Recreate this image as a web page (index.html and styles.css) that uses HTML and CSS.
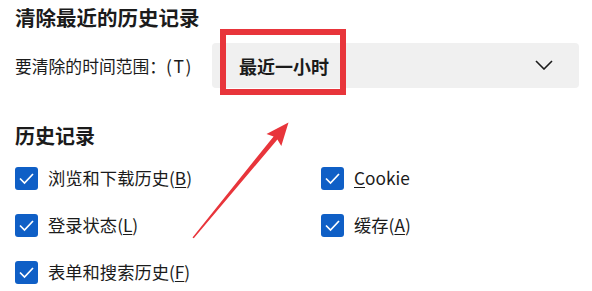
FILE: index.html
```html
<!DOCTYPE html>
<html lang="zh-CN">
<head>
<meta charset="utf-8">
<title>清除最近的历史记录</title>
<link rel="stylesheet" href="styles.css">
</head>
<body>
<div class="page">
  <h1 class="title">清除最近的历史记录</h1>
  <div class="range-row">
    <span class="range-label">要清除的时间范围：<span class="key">(T)</span></span>
    <div class="select">
      <span class="select-value">最近一小时</span>
      <svg class="chevron" width="18" height="10" viewBox="0 0 18 10"><path d="M1 1 L9 9 L17 1" fill="none" stroke="#1b1b1b" stroke-width="1.6"/></svg>
      <div class="highlight"></div>
    </div>
  </div>
  <h2 class="section">历史记录</h2>
  <div class="checks">
    <label class="check"><span class="box"><svg width="23" height="23" viewBox="0 0 23 23"><path d="M5 11.5 L9.5 16 L18 7" fill="none" stroke="#fff" stroke-width="1.7"/></svg></span><span class="text">浏览和下载历史(<u>B</u>)</span></label>
    <label class="check"><span class="box"><svg width="23" height="23" viewBox="0 0 23 23"><path d="M5 11.5 L9.5 16 L18 7" fill="none" stroke="#fff" stroke-width="1.7"/></svg></span><span class="text"><u>C</u>ookie</span></label>
    <label class="check"><span class="box"><svg width="23" height="23" viewBox="0 0 23 23"><path d="M5 11.5 L9.5 16 L18 7" fill="none" stroke="#fff" stroke-width="1.7"/></svg></span><span class="text">登录状态(<u>L</u>)</span></label>
    <label class="check"><span class="box"><svg width="23" height="23" viewBox="0 0 23 23"><path d="M5 11.5 L9.5 16 L18 7" fill="none" stroke="#fff" stroke-width="1.7"/></svg></span><span class="text">缓存(<u>A</u>)</span></label>
    <label class="check"><span class="box"><svg width="23" height="23" viewBox="0 0 23 23"><path d="M5 11.5 L9.5 16 L18 7" fill="none" stroke="#fff" stroke-width="1.7"/></svg></span><span class="text">表单和搜索历史(<u>F</u>)</span></label>
  </div>
  <svg class="arrow" width="592" height="291" viewBox="0 0 592 291">
    <polygon points="192.5,237.5 273.6,136.4 266.5,134 288.5,122.5 281.3,146 277.4,139.6 193.8,238.3" fill="#e8353b"/>
  </svg>
</div>
</body>
</html>
```
FILE: styles.css
```css
html, body {
  margin: 0;
  padding: 0;
  background: #ffffff;
}
.page {
  position: relative;
  width: 592px;
  height: 291px;
  box-sizing: border-box;
  padding: 0 0 0 15px;
  font-family: "Noto Sans CJK SC", "Noto Sans", sans-serif;
  color: #1b1b1b;
  overflow: hidden;
}
.title {
  margin: 0;
  font-size: 20.5px;
  font-weight: 700;
  line-height: 34px;
  height: 34px;
}
.range-row {
  display: flex;
  align-items: center;
  margin-top: 9px;
  height: 45px;
}
.range-label {
  font-size: 16.8px;
  line-height: 45px;
  width: 197px;
  white-space: nowrap;
}
.key {
  font-size: 17.5px;
  letter-spacing: 1.5px;
}
.select {
  position: relative;
  display: flex;
  align-items: center;
  justify-content: space-between;
  width: 367px;
  height: 45px;
  box-sizing: border-box;
  padding: 0 26px 0 27px;
  background: #f0f0f0;
  border-radius: 4px;
}
.select-value {
  font-size: 18px;
  font-weight: 700;
  line-height: 45px;
  padding-top: 1px;
}
.chevron {
  display: block;
  margin-top: -2px;
}
.highlight {
  position: absolute;
  left: 8px;
  top: -14px;
  width: 126px;
  height: 66px;
  box-sizing: border-box;
  border: 6px solid #e8353b;
}
.section {
  margin: 34px 0 0 0;
  font-size: 20px;
  font-weight: 700;
  line-height: 28px;
  height: 28px;
}
.checks {
  display: grid;
  grid-template-columns: 306px auto;
  row-gap: 23px;
  margin-top: 16px;
}
.check {
  display: flex;
  align-items: center;
  height: 24px;
}
.box {
  display: flex;
  width: 23px;
  height: 23px;
  background: #0f5fc6;
  border-radius: 3px;
  flex: none;
}
.text {
  margin-left: 10px;
  font-size: 17.3px;
  line-height: 24px;
  white-space: nowrap;
}
.text u {
  text-decoration-thickness: 1px;
  text-underline-offset: 2px;
}
.arrow {
  position: absolute;
  left: 0;
  top: 0;
  pointer-events: none;
}
```
